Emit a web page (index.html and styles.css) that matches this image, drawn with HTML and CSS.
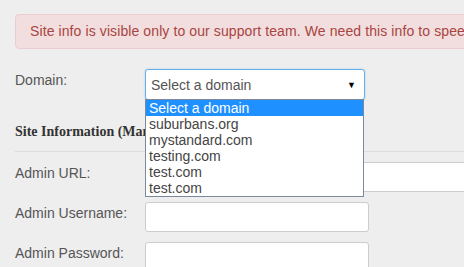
FILE: index.html
```html
<!DOCTYPE html>
<html lang="en">
<head>
    <meta charset="UTF-8">
    <meta name="viewport" content="width=device-width, initial-scale=1.0">
    <title>Site Info</title>
    <link rel="stylesheet" href="styles.css">
</head>
<body>
    <div class="page">
        <div class="alert">Site info is visible only to our support team. We need this info to speed up support requests.</div>

        <div class="form-row domain-row">
            <label class="field-label">Domain:</label>
            <div class="select-wrap">
                <div class="select-box">
                    <span>Select a domain</span>
                    <span class="caret">&#9660;</span>
                </div>
                <ul class="dropdown">
                    <li class="selected">Select a domain</li>
                    <li>suburbans.org</li>
                    <li>mystandard.com</li>
                    <li>testing.com</li>
                    <li>test.com</li>
                    <li>test.com</li>
                </ul>
            </div>
        </div>

        <h4 class="section-title">Site Information (Mandatory)</h4>
        <hr class="divider">

        <div class="form-row">
            <label class="field-label">Admin URL:</label>
            <input type="text" class="text-input wide">
        </div>
        <div class="form-row">
            <label class="field-label">Admin Username:</label>
            <input type="text" class="text-input">
        </div>
        <div class="form-row">
            <label class="field-label">Admin Password:</label>
            <input type="password" class="text-input">
        </div>
    </div>
</body>
</html>
```

FILE: styles.css
```css
body {
    margin: 0;
    background-color: #eeeeee;
    font-family: "Liberation Sans", Arial, sans-serif;
    font-size: 14px;
    color: #555;
    overflow: hidden;
}
.page {
    padding: 14px 0 0 15px;
    width: 700px;
}
.alert {
    box-sizing: border-box;
    width: 640px;
    height: 35px;
    padding: 0 14px;
    line-height: 33px;
    letter-spacing: 0.1px;
    white-space: nowrap;
    color: #a94442;
    background-color: #f2dede;
    border: 1px solid #ebccd1;
    border-radius: 4px;
}
.form-row {
    display: flex;
    align-items: flex-start;
    margin-top: 10px;
}
.domain-row {
    margin-top: 20px;
}
.field-label {
    width: 130px;
    line-height: 20px;
    padding-top: 1px;
}
.select-wrap {
    position: relative;
}
.select-box {
    box-sizing: border-box;
    width: 220px;
    height: 31px;
    display: flex;
    align-items: center;
    justify-content: space-between;
    padding: 1px 8px 0 5px;
    background-color: #fff;
    border: 1px solid #66afe9;
    border-radius: 3px;
    box-shadow: 0 0 2px rgba(102, 175, 233, 0.5);
}
.caret {
    font-size: 9px;
    color: #000;
}
.dropdown {
    position: absolute;
    top: 30px;
    left: 0;
    box-sizing: border-box;
    width: 219px;
    margin: 0;
    padding: 0;
    list-style: none;
    background-color: #fff;
    border: 1px solid #7a8a9c;
    color: #444;
    z-index: 2;
}
.dropdown li {
    height: 16px;
    line-height: 16px;
    padding-left: 3px;
    white-space: nowrap;
}
.dropdown li.selected {
    background-color: #1e90ff;
    color: #fff;
}
.section-title {
    margin: 22px 0 0;
    font-family: "Liberation Serif", "Times New Roman", serif;
    font-size: 14px;
    font-weight: bold;
    line-height: 20px;
    color: #333;
    white-space: nowrap;
}
.divider {
    margin: 9px 0 0;
    border: 0;
    border-top: 1px solid #dddddd;
}
.text-input {
    box-sizing: border-box;
    width: 224px;
    height: 30px;
    margin: 0;
    padding: 4px 8px;
    background-color: #fff;
    border: 1px solid #cccccc;
    border-radius: 3px;
    font-family: inherit;
    font-size: 14px;
}
.text-input.wide {
    width: 420px;
}
```
